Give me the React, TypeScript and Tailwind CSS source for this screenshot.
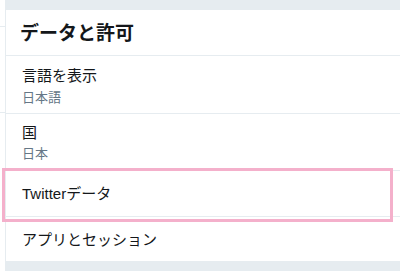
import React from "react";

export default function App() {
  const font = { fontFamily: '"Liberation Sans", "Noto Sans CJK JP", sans-serif' };
  return (
    <div className="relative w-[400px] h-[271px] overflow-hidden bg-white" style={font}>
      <div className="flex h-full">
        <div className="w-[5px] shrink-0 flex flex-col">
          <div className="h-[27px] border-b border-[#e6ecf0]" />
          <div className="h-[86px] border-b border-[#e6ecf0]" />
        </div>
        <div className="flex-1 flex flex-col border-l border-[#e6ecf0]">
          <div className="h-[10px] bg-[#e6ecf0]" />
          <div className="h-[46px] border-b border-[#e6ecf0] pl-[14px] pt-[3px] flex items-center text-[19px] font-bold text-[#14171a] leading-[24px]">
            データと許可
          </div>
          <div className="pl-[16px] pt-[10px] pb-[6px] border-b border-[#e6ecf0]">
            <div className="text-[15px] leading-[20px] text-[#14171a]">言語を表示</div>
            <div className="mt-[3px] text-[13px] leading-[18px] text-[#657786]">日本語</div>
          </div>
          <div className="pl-[16px] pt-[9px] pb-[7px] border-b border-[#e6ecf0]">
            <div className="text-[15px] leading-[20px] text-[#14171a]">国</div>
            <div className="mt-[2px] text-[13px] leading-[18px] text-[#657786]">日本</div>
          </div>
          <div className="h-[46px] pl-[16px] pt-[2px] flex items-center border-b border-[#e6ecf0] text-[15px] text-[#14171a]">
            Twitterデータ
          </div>
          <div className="h-[44px] pl-[16px] pt-[3px] flex items-center text-[15px] text-[#14171a]">
            アプリとセッション
          </div>
          <div className="flex-1 bg-[#e6ecf0]" />
        </div>
      </div>
      <div className="absolute left-[2px] top-[168px] w-[391px] h-[54px] border-[3px] border-[#f4b0cb]" />
    </div>
  );
}
